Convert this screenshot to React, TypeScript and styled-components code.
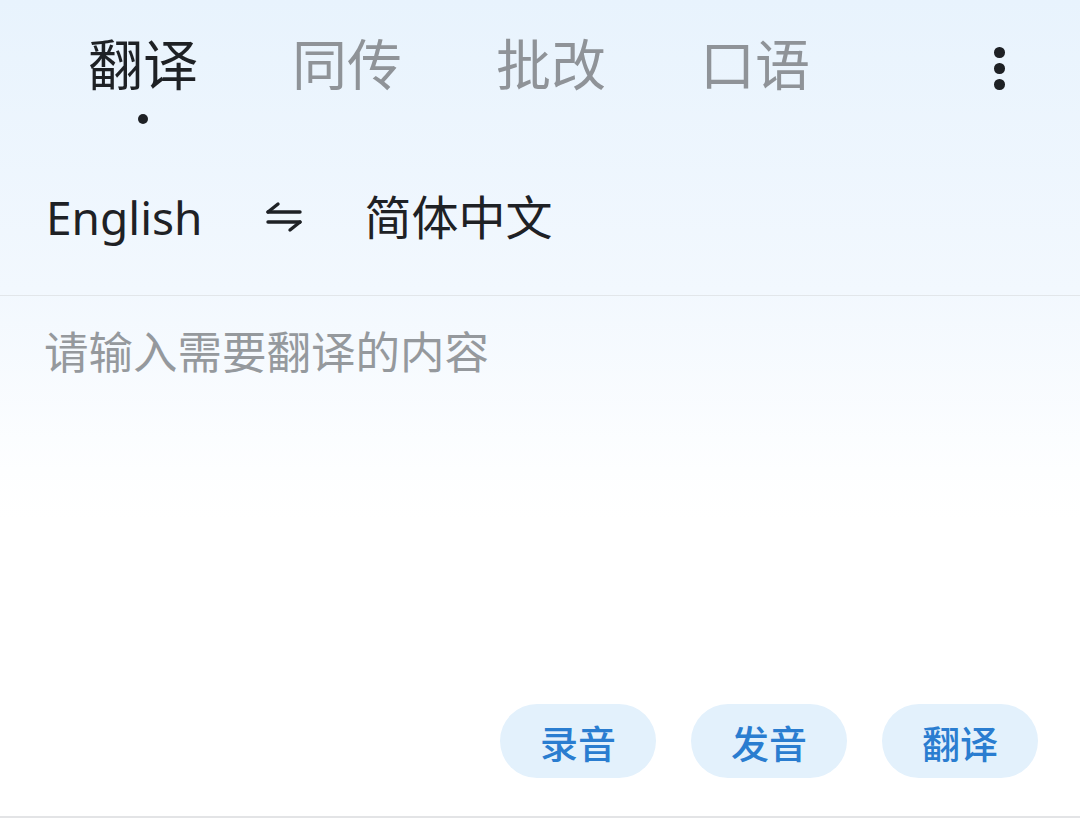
import React from "react";
import styled, { createGlobalStyle } from "styled-components";

const Global = createGlobalStyle`
  html, body { margin: 0; padding: 0; }
  body {
    width: 1080px;
    height: 829px;
    overflow: hidden;
    font-family: "Noto Sans", "Noto Sans CJK SC", sans-serif;
    background: linear-gradient(180deg, #e8f3fd 0px, #f2f8fe 290px, #fdfeff 470px, #ffffff 520px);
  }
`;

const Page = styled.div`
  width: 1080px;
  height: 829px;
  display: flex;
  flex-direction: column;
`;

const TabBar = styled.div`
  height: 150px;
  display: flex;
  align-items: flex-start;
  padding-left: 41px;
  padding-right: 75px;
`;

const Tab = styled.div<{ $active?: boolean }>`
  width: 204px;
  display: flex;
  flex-direction: column;
  align-items: center;
  padding-top: 26px;
  font-family: "Noto Sans CJK SC", sans-serif;
  font-size: 55px;
  line-height: 70px;
  color: ${(p) => (p.$active ? "#1e2125" : "#8f9398")};
`;

const Dot = styled.span<{ $show?: boolean }>`
  width: 10px;
  height: 10px;
  border-radius: 50%;
  margin-top: 18px;
  background: ${(p) => (p.$show ? "#1e2125" : "transparent")};
`;

const Spacer = styled.div`
  flex: 1;
`;

const Kebab = styled.div`
  margin-top: 47px;
  display: flex;
  flex-direction: column;
  gap: 5.5px;
  align-items: center;
  width: 11px;
`;

const KDot = styled.span`
  width: 10.5px;
  height: 10.5px;
  border-radius: 50%;
  background: #1e2125;
`;

const LangRow = styled.div`
  height: 146px;
  display: flex;
  align-items: center;
  padding-left: 46px;
  padding-bottom: 12px;
  box-sizing: border-box;
  border-bottom: 1px solid #e2e6ea;
`;

const LangText = styled.span<{ $cjk?: boolean }>`
  font-family: ${(p) => (p.$cjk ? '"Noto Sans CJK SC", sans-serif' : '"Noto Sans", sans-serif')};
  font-size: ${(p) => (p.$cjk ? "47px" : "46px")};
  color: #1e2125;
  line-height: 60px;
  margin-top: ${(p) => (p.$cjk ? "-4px" : "0")};
`;

const SwapIcon = styled.svg`
  margin: 0 62px 0 62px;
  width: 38px;
  height: 34px;
`;

const Input = styled.div`
  flex: 1;
  padding: 24px 0 0 44px;
  font-family: "Noto Sans CJK SC", sans-serif;
  font-size: 44.5px;
  line-height: 60px;
  color: #95999d;
`;

const Actions = styled.div`
  display: flex;
  justify-content: flex-end;
  gap: 35px;
  padding-right: 42px;
  padding-bottom: 38px;
`;

const Pill = styled.button`
  width: 156px;
  height: 74px;
  border: none;
  border-radius: 37px;
  background: #e3f1fc;
  color: #2a7dd0;
  font-family: "Noto Sans CJK SC", sans-serif;
  font-size: 38px;
  font-weight: 500;
  padding: 0;
  display: flex;
  align-items: center;
  justify-content: center;
`;

const BottomLine = styled.div`
  height: 2px;
  background: #e3e4e6;
  margin-bottom: 11px;
`;

export default function App() {
  const tabs = ["翻译", "同传", "批改", "口语"];
  return (
    <>
      <Global />
      <Page>
        <TabBar>
          {tabs.map((t, i) => (
            <Tab key={t} $active={i === 0}>
              {t}
              <Dot $show={i === 0} />
            </Tab>
          ))}
          <Spacer />
          <Kebab>
            <KDot />
            <KDot />
            <KDot />
          </Kebab>
        </TabBar>
        <LangRow>
          <LangText>English</LangText>
          <SwapIcon viewBox="0 0 38 34">
            <g stroke="#1e2125" strokeWidth="3.4" strokeLinecap="round" fill="none">
              <path d="M3 12 H35" />
              <path d="M3 12 L13 4" />
              <path d="M3 22 H35" />
              <path d="M35 22 L25 30" />
            </g>
          </SwapIcon>
          <LangText $cjk>简体中文</LangText>
        </LangRow>
        <Input>请输入需要翻译的内容</Input>
        <Actions>
          <Pill>录音</Pill>
          <Pill>发音</Pill>
          <Pill>翻译</Pill>
        </Actions>
        <BottomLine />
      </Page>
    </>
  );
}
